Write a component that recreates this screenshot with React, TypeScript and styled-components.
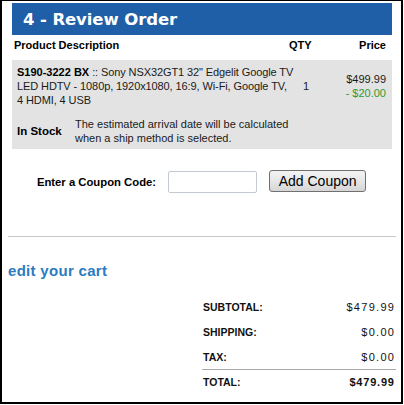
import styled, { createGlobalStyle } from "styled-components";

const GlobalStyle = createGlobalStyle`
  html, body {
    margin: 0;
    padding: 0;
    background: #fff;
    font-family: "Liberation Sans", Arial, sans-serif;
    color: #000;
  }
`;

const Frame = styled.div`
  box-sizing: border-box;
  width: 403px;
  height: 404px;
  border-style: solid;
  border-color: #000;
  border-width: 1px 2px 2px 2px;
  display: flex;
  flex-direction: column;
  overflow: hidden;
`;

const StepHeader = styled.h1`
  box-sizing: border-box;
  margin: 2px 9px 0 10px;
  height: 32px;
  padding-left: 11px;
  display: flex;
  align-items: center;
  background: #1f5fa8;
  color: #fff;
  font-family: "DejaVu Sans", Verdana, sans-serif;
  font-weight: bold;
  font-size: 16.5px;
  letter-spacing: -0.1px;
`;

const OrderTable = styled.div`
  margin: 0 9px 0 10px;
`;

const ColumnHead = styled.div`
  box-sizing: border-box;
  height: 25px;
  padding: 3px 6px 0 2px;
  display: grid;
  grid-template-columns: 1fr 40px 61px;
  font-size: 11px;
  line-height: 14px;
  font-weight: bold;
`;

const HeadCell = styled.div<{ align?: string; pad?: number }>`
  text-align: ${({ align }) => align || "left"};
  padding-left: ${({ pad }) => pad || 0}px;
`;

const ItemBox = styled.div`
  background: #e3e3e3;
  padding: 5px 6px 4px 5px;
  font-size: 11px;
  line-height: 14px;
  color: #1a1a1a;
`;

const ItemRow = styled.div`
  display: grid;
  grid-template-columns: 280px 1fr auto;
  align-items: center;
`;

// one line of the product title, kept on its own row
const Line = styled.span`
  display: block;
  white-space: nowrap;
  letter-spacing: -0.1px;
`;

const Sku = styled.b`
  color: #000;
  letter-spacing: 0;
`;

const Qty = styled.div`
  padding-left: 6px;
`;

const PriceCell = styled.div`
  text-align: right;
`;

const Discount = styled.div`
  color: #2f9a2f;
`;

const StockRow = styled.div`
  margin-top: 10px;
  display: grid;
  grid-template-columns: 58px 220px;
  align-items: center;
`;

const StockLabel = styled.div`
  font-weight: bold;
  font-size: 11.5px;
  color: #000;
`;

const CouponRow = styled.div`
  margin-top: 21px;
  height: 23px;
  display: flex;
  align-items: center;
  justify-content: center;
  gap: 12px;
`;

const CouponLabel = styled.label`
  font-weight: bold;
  font-size: 11.3px;
`;

const CouponInput = styled.input`
  box-sizing: border-box;
  width: 89px;
  height: 22px;
  margin: 0;
  border: 1px solid #c3cad3;
  border-radius: 2px;
  background: #fff;
`;

const CouponButton = styled.button`
  box-sizing: border-box;
  width: 97px;
  height: 22px;
  margin: 0 0 1px 0;
  padding: 0;
  border: 1px solid #707070;
  border-radius: 3px;
  background: linear-gradient(#f4f4f4, #e6e6e6 50%, #d6d6d6);
  font-family: "Liberation Sans", Arial, sans-serif;
  font-size: 14px;
  color: #000;
`;

const Divider = styled.hr`
  margin: 43px 5px 0 6px;
  border: 0;
  height: 1px;
  background: #c8c8c8;
`;

const EditLink = styled.a`
  display: block;
  margin: 25px 0 0 6px;
  font-size: 15px;
  line-height: 18px;
  font-weight: bold;
  letter-spacing: 0.3px;
  color: #2b7bc1;
  text-decoration: none;
`;

const Totals = styled.div`
  margin: 14px 5px 0 auto;
  width: 194px;
`;

const TotalRow = styled.div<{ rule?: boolean }>`
  box-sizing: border-box;
  height: 25px;
  padding: 0 2px 0 1px;
  display: flex;
  align-items: center;
  justify-content: space-between;
  border-top: ${({ rule }) => (rule ? "1px solid #a8a8a8" : "0")};
`;

const TotalLabel = styled.span`
  font-weight: bold;
  font-size: 10.5px;
  color: #111;
`;

const TotalValue = styled.span<{ strong?: boolean }>`
  font-size: 11px;
  font-weight: ${({ strong }) => (strong ? "bold" : "normal")};
  letter-spacing: ${({ strong }) => (strong ? 0.8 : 1.3)}px;
  margin-right: ${({ strong }) => (strong ? -0.8 : -1.3)}px;
  color: #111;
`;

function App() {
  return (
    <Frame>
      <GlobalStyle />
      <StepHeader>4 - Review Order</StepHeader>

      <OrderTable>
        <ColumnHead>
          <HeadCell>Product Description</HeadCell>
          <HeadCell pad={4}>QTY</HeadCell>
          <HeadCell align="right">Price</HeadCell>
        </ColumnHead>

        <ItemBox>
          <ItemRow>
            <div>
              <Line>
                <Sku>S190-3222 BX</Sku> :: Sony NSX32GT1 32" Edgelit Google TV
              </Line>
              <Line>LED HDTV - 1080p, 1920x1080, 16:9, Wi-Fi, Google TV,</Line>
              <Line>4 HDMI, 4 USB</Line>
            </div>
            <Qty>1</Qty>
            <PriceCell>
              <div>$499.99</div>
              <Discount>- $20.00</Discount>
            </PriceCell>
          </ItemRow>
          <StockRow>
            <StockLabel>In Stock</StockLabel>
            <div>
              The estimated arrival date will be calculated when a ship method
              is selected.
            </div>
          </StockRow>
        </ItemBox>
      </OrderTable>

      <CouponRow>
        <CouponLabel htmlFor="coupon">Enter a Coupon Code:</CouponLabel>
        <CouponInput id="coupon" type="text" />
        <CouponButton type="button">Add Coupon</CouponButton>
      </CouponRow>

      <Divider />

      <EditLink href="#cart">edit your cart</EditLink>

      <Totals>
        <TotalRow>
          <TotalLabel>SUBTOTAL:</TotalLabel>
          <TotalValue>$479.99</TotalValue>
        </TotalRow>
        <TotalRow>
          <TotalLabel>SHIPPING:</TotalLabel>
          <TotalValue>$0.00</TotalValue>
        </TotalRow>
        <TotalRow>
          <TotalLabel>TAX:</TotalLabel>
          <TotalValue>$0.00</TotalValue>
        </TotalRow>
        <TotalRow rule>
          <TotalLabel>TOTAL:</TotalLabel>
          <TotalValue strong>$479.99</TotalValue>
        </TotalRow>
      </Totals>
    </Frame>
  );
}

export default App;
